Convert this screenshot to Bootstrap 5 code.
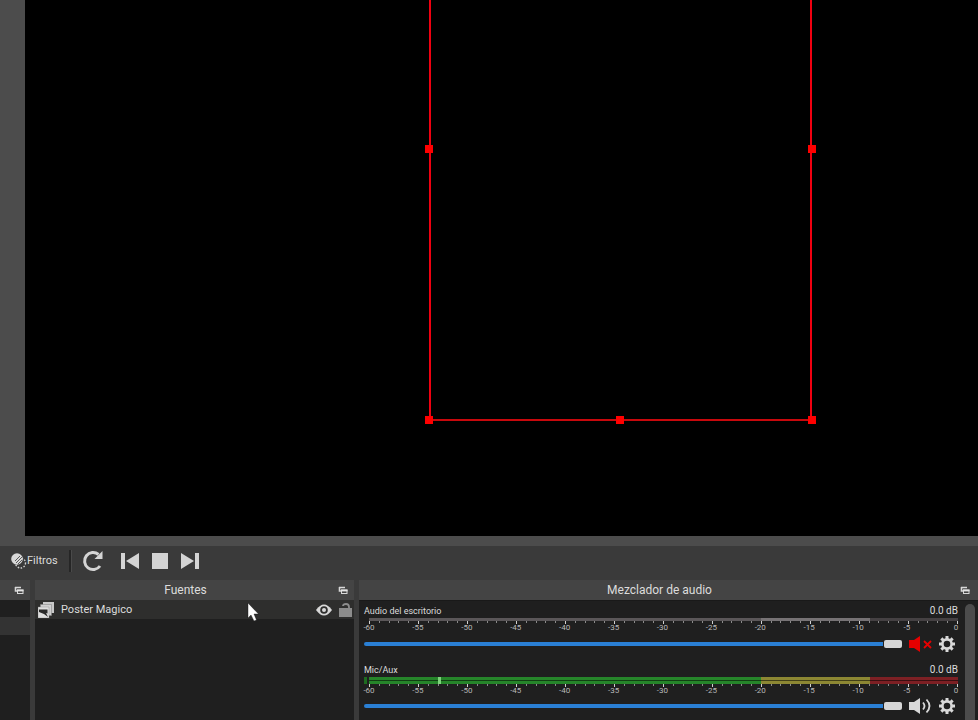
<!DOCTYPE html>
<html lang="es">
<head>
<meta charset="utf-8">
<meta name="viewport" content="width=device-width, initial-scale=1">
<title>Mezclador</title>
<link href="https://cdn.jsdelivr.net/npm/bootstrap@5.3.0/dist/css/bootstrap.min.css" rel="stylesheet">
<style>
body{background:#3a3a3a;color:#dcdcdc;font:11px/16px Roboto,"Noto Sans",sans-serif}
button{background:none;border:0;padding:0;color:inherit}
svg{display:block}
.preview{background:#4c4c4c;padding:0 0 10px 25px;min-height:0}
.stage{background:#000}
.selection{left:404px;top:-20px;width:383px;height:441px;border:2px solid #f00010;border-bottom-color:#c8080c}
.grip{width:8px;height:8px;background:#f00}
.g-ml{left:-6px;top:163px}.g-mr{right:-6px;top:163px}
.g-bl{left:-6px;bottom:-5px}.g-bm{left:185px;bottom:-5px}.g-br{right:-6px;bottom:-5px}
.tools{height:34px;padding:0 0 4px 11px}
.transport{gap:13px}
.sep{width:3px;height:22px;margin:0 10px 0 11px;background:#262626;border-right:1px solid #4a4a4a}
.docks{height:140px;gap:5px}
.dock-scenes{width:30px}.dock-sources{width:319px}
.dock-head{height:20px;background:#444;font-size:12px;line-height:20px;padding-right:6px}
.dock-mixer .dock-head{padding-right:8px}
.dock-sources .dock-head span{padding-right:2px}
.panel{background:#1f1f1f}
.scene-row{height:18px;margin-top:17px;background:#333}
.source-row{height:19px;background:#2e2e2d;padding:0 2px 0 3px;gap:7px}
.mixer{padding:3px 3px 0 5px;gap:7px;border-top:1px solid #191919}
.channel{height:59px}
.channel + .channel{height:62px}
.chan-label{font-size:10px;line-height:14px}
.chan-label label{font-size:9px}
.meter{height:3px;margin-left:5px}
.meter-idle{background:linear-gradient(to right,#5b5759 0 66.6%,#777375 66.6% 85%,#454143 85%)}
.meter-live{height:7px;background:
 linear-gradient(#0000 0 3px,#0008 3px 4px,#0000 4px),
 linear-gradient(to right,#26852a 0 66.6%,#8c8733 66.6% 85%,#7d2024 85%)}
.peak{left:69px;top:0;width:3px;height:7px;background:#7fd37c}
.floor-mark{left:-5px;top:0;width:3px;height:7px;background:#1d6b20}
.ticks{height:3px;margin-left:5px}
.ticks span{width:1px;height:2px;background:#8a8a8a}
.ticks span:nth-child(5n+1){height:3px;background:#d0d0d0}
.scale{height:9px;margin:0 2px 0 5px;font-size:8px;line-height:8px;color:#b8b8b8}
.scale span{width:0;display:flex;justify-content:center}
.controls{gap:7px;height:22px;padding-right:3px}
.meter-live ~ .controls{height:20px}
.fader{-webkit-appearance:none;appearance:none;background:none;height:10px;min-width:0;margin:0}
.fader::-webkit-slider-runnable-track{height:4px;border-radius:2px;background:#2a7fd4}
.fader::-webkit-slider-thumb{-webkit-appearance:none;width:18px;height:8px;margin-top:-2px;border-radius:2px;background:#d6d6d6;box-shadow:0 0 0 1px #1f1f1f}
.scroller{width:10px;border-radius:5px 5px 0 0;background:#4c4c4c}
.pointer{left:247px;top:602px}
</style>
<script src="https://cdn.jsdelivr.net/npm/bootstrap@5.3.0/dist/js/bootstrap.bundle.min.js"></script>
</head>
<body class="d-flex flex-column vh-100 overflow-hidden position-relative">
<svg class="d-none">
 <symbol id="float" viewBox="0 0 10 8"><path d="M1 1.500h6M1.500 1v4h2" fill="none" stroke="#d8d8d8" stroke-width="1.600"/><rect x="3.500" y="4" width="5.500" height="3.500" fill="#444" stroke="#d8d8d8"/><path d="M3 4.500h6.500" stroke="#e4e4e4" stroke-width="1.800"/></symbol>
 <symbol id="gear" viewBox="0 0 16 16"><g fill="#d8d8d8"><path d="M6.500 0h3v3h-3zM6.500 13h3v3h-3zM0 6.500h3v3H0zM13 6.500h3v3h-3z"/><path transform="rotate(45 8 8)" d="M6.500 0h3v3h-3zM6.500 13h3v3h-3zM0 6.500h3v3H0zM13 6.500h3v3h-3z"/></g><circle cx="8" cy="8" r="4.600" fill="none" stroke="#d8d8d8" stroke-width="2.600"/></symbol>
</svg>

<main class="preview flex-grow-1 d-flex">
 <div class="stage flex-grow-1 position-relative overflow-hidden">
  <div class="selection position-absolute">
   <span class="grip g-ml position-absolute"></span><span class="grip g-mr position-absolute"></span>
   <span class="grip g-bl position-absolute"></span><span class="grip g-bm position-absolute"></span><span class="grip g-br position-absolute"></span>
  </div>
 </div>
</main>

<div class="tools d-flex align-items-center flex-shrink-0">
 <button class="d-flex align-items-center"><svg width="16" height="16" viewBox="0 0 16 16"><circle cx="9.500" cy="10" r="5" fill="none" stroke="#d0d0d0" stroke-width="1.400" stroke-dasharray="1.500 1.500"/><circle cx="6" cy="6" r="5.800" fill="#d8d8d8"/><path d="M4 8l5-5M5 10l6-6M7 11l4-4" stroke="#3a3a3a" stroke-width=".8"/></svg><span>Filtros</span></button>
 <span class="sep"></span>
 <div class="transport d-flex align-items-center">
 <button aria-label="Reiniciar"><svg width="22" height="22" viewBox="0 0 22 22"><path d="M16.500 4.500A8.500 8.500 0 1 0 18 16" fill="none" stroke="#d4d4d4" stroke-width="3"/><path d="M20.500 1v8h-8z" fill="#d4d4d4"/></svg></button>
 <button class="ps-1" aria-label="Anterior"><svg width="18" height="16" viewBox="0 0 18 16"><path d="M0 0h4v16H0zM18 0v16L5 8z" fill="#d4d4d4"/></svg></button>
 <button aria-label="Detener"><svg width="16" height="16" viewBox="0 0 16 16"><path d="M0 0h16v16H0z" fill="#d4d4d4"/></svg></button>
 <button aria-label="Siguiente"><svg width="18" height="16" viewBox="0 0 18 16"><path d="M14 0h4v16h-4zM0 0v16l13-8z" fill="#d4d4d4"/></svg></button>
 </div>
</div>

<div class="docks d-flex flex-shrink-0">
 <section class="dock-scenes d-flex flex-column flex-shrink-0">
  <div class="dock-head d-flex align-items-center justify-content-end"><button aria-label="Desacoplar escenas"><svg width="10" height="8"><use href="#float"/></svg></button></div>
  <div class="panel flex-grow-1"><div class="scene-row"></div></div>
 </section>
 <section class="dock-sources d-flex flex-column flex-shrink-0">
  <div class="dock-head d-flex align-items-center"><span class="flex-grow-1 text-center">Fuentes</span><button aria-label="Desacoplar fuentes"><svg width="10" height="8"><use href="#float"/></svg></button></div>
  <div class="panel flex-grow-1">
   <div class="source-row d-flex align-items-center">
    <svg width="16" height="16" viewBox="0 0 16 16"><path d="M5 0h11v11H5z" fill="#c8c8c8"/><path d="M2.500 2.500h11v11h-11z" fill="#d0d0d0" stroke="#888" stroke-width=".6"/><path d="M0 5h11v11H0z" fill="#dedede" stroke="#888" stroke-width=".4"/><path d="M1 7.500h8.500v4l-1.500-.5 2 4-4-3-5-2z" fill="#292929"/></svg>
    <span class="flex-grow-1">Poster Magico</span>
    <button aria-label="Visible"><svg width="16" height="12" viewBox="0 0 16 12"><path d="M0 6q8-11 16 0q-8 11-16 0" fill="#d8d8d8"/><circle cx="8" cy="6" r="3.800" fill="#2e2e2d"/><circle cx="8" cy="6" r="2" fill="#d8d8d8"/></svg></button>
    <button aria-label="Bloquear"><svg width="13" height="14" viewBox="0 0 13 14"><path d="M0 5h13v9H0z" fill="#8c8c8c"/><path d="M4 3q0-2 3-2t3 3v3" fill="none" stroke="#8c8c8c" stroke-width="1.800"/></svg></button>
   </div>
  </div>
 </section>
 <section class="dock-mixer d-flex flex-column flex-grow-1">
  <div class="dock-head d-flex align-items-center"><span class="flex-grow-1 text-center">Mezclador de audio</span><button aria-label="Desacoplar mezclador"><svg width="10" height="8"><use href="#float"/></svg></button></div>
  <div class="mixer panel flex-grow-1 d-flex">
   <div class="flex-grow-1">
    <div class="channel">
     <div class="chan-label d-flex justify-content-between"><label for="desk">Audio del escritorio</label><span>0.0 dB</span></div>
     <div class="meter meter-idle"></div>
     <div class="ticks d-flex justify-content-between"></div><div class="scale d-flex justify-content-between"></div>
     <div class="controls d-flex align-items-center"><input id="desk" class="fader flex-grow-1" type="range" value="100">
      <button aria-label="Activar sonido"><svg width="23" height="16" viewBox="0 0 23 16"><path d="M0 4h5l6-4v16l-6-4H0z" fill="#e60000"/><path d="M15 5l7 7M22 5l-7 7" stroke="#e60000" stroke-width="1.800"/></svg></button>
      <button aria-label="Ajustes del escritorio"><svg width="16" height="16"><use href="#gear"/></svg></button></div>
    </div>
    <div class="channel">
     <div class="chan-label d-flex justify-content-between"><label for="mic">Mic/Aux</label><span>0.0 dB</span></div>
     <div class="meter meter-live position-relative"><span class="floor-mark position-absolute"></span><span class="peak position-absolute"></span></div>
     <div class="ticks d-flex justify-content-between"></div><div class="scale d-flex justify-content-between"></div>
     <div class="controls d-flex align-items-center"><input id="mic" class="fader flex-grow-1" type="range" value="100">
      <button aria-label="Silenciar"><svg width="23" height="16" viewBox="0 0 23 16"><path d="M0 4h5l6-4v16l-6-4H0z" fill="#d8d8d8"/><path d="M14 4.500q3 3.500 0 7M17.500 1.500q6 6.500 0 13" fill="none" stroke="#d8d8d8" stroke-width="1.800"/></svg></button>
      <button aria-label="Ajustes del micrófono"><svg width="16" height="16"><use href="#gear"/></svg></button></div>
    </div>
   </div>
   <div class="scroller"></div>
  </div>
 </section>
</div>
<svg class="pointer position-absolute" width="12" height="19" viewBox="0 0 12 19"><path d="M1 1v15l3-3 3 6 2.500-1L7 12h4.500z" fill="#fff" stroke="#111" stroke-width=".4"/></svg>
<script>
document.querySelectorAll('.ticks').forEach(t => { for (let i = 0; i <= 60; i++) t.append(document.createElement('span')); });
document.querySelectorAll('.scale').forEach(s => { for (let d = -60; d <= 0; d += 5) { const e = document.createElement('span'); e.textContent = d; s.append(e); } });
</script>
</body>
</html>
